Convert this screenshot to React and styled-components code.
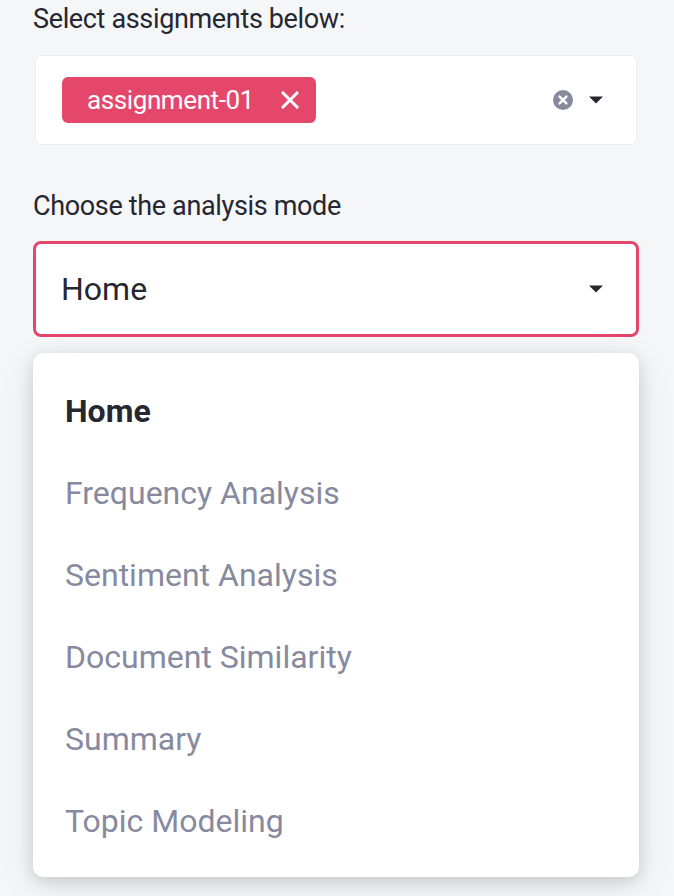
import React from "react";
import styled, { createGlobalStyle } from "styled-components";

const Global = createGlobalStyle`
  html, body { margin: 0; padding: 0; background: #f5f6f8; }
  body { font-family: Roboto, "Noto Sans", "Liberation Sans", sans-serif; color: #262730; }
  * { box-sizing: border-box; }
`;

const Page = styled.div`
  width: 674px;
  height: 896px;
  overflow: hidden;
  padding: 1px 35px 0 33px;
  display: flex;
  flex-direction: column;
`;

const Label = styled.div`
  font-size: 27px;
  line-height: 36px;
  height: 36px;
  color: #262730;
  letter-spacing: -0.35px;
  margin-top: ${(p) => p.$top || 0}px;
`;

const MultiBox = styled.div`
  margin-top: 18px;
  margin-left: 2px;
  margin-right: 2px;
  height: 90px;
  background: #fff;
  border: 1px solid #eceef2;
  border-radius: 6px;
  display: flex;
  align-items: center;
  padding: 0 32px 0 26px;
`;

const Tag = styled.div`
  height: 46px;
  width: 254px;
  background: #e4476a;
  border-radius: 6px;
  color: #fff;
  font-size: 26px;
  letter-spacing: -0.4px;
  display: flex;
  align-items: center;
  justify-content: space-between;
  padding: 0 17px 0 25px;
`;

const Spacer = styled.div`
  flex: 1;
`;

const IconRow = styled.div`
  display: flex;
  align-items: center;
  gap: 14px;
`;

const Select = styled.div`
  margin-top: 17px;
  height: 96px;
  background: #fff;
  border: 3px solid #e4476a;
  border-radius: 8px;
  display: flex;
  align-items: center;
  padding: 0 32px 0 25px;
  font-size: 32px;
  color: #262730;
`;

const Menu = styled.div`
  margin-top: 16px;
  background: #fff;
  border-radius: 10px;
  box-shadow: 0 4px 16px rgba(0, 0, 0, 0.14), 0 10px 40px rgba(0, 0, 0, 0.08);
  padding: 17px 0 15px 32px;
  display: flex;
  flex-direction: column;
`;

const Item = styled.div`
  height: 82px;
  line-height: 82px;
  font-size: 32px;
  font-weight: ${(p) => (p.$active ? 700 : 400)};
  color: ${(p) => (p.$active ? "#262730" : "#878a9e")};
  white-space: nowrap;
`;

const Caret = () => (
  <svg width="16" height="10" viewBox="0 0 16 10">
    <path d="M1 1.5 L15 1.5 L8 8.5 Z" fill="#262730" />
  </svg>
);

const ClearIcon = () => (
  <svg width="22" height="22" viewBox="0 0 22 22">
    <circle cx="11" cy="11" r="10" fill="#878a9e" />
    <path d="M7.6 7.6 L14.4 14.4 M14.4 7.6 L7.6 14.4" stroke="#fff" strokeWidth="2.4" strokeLinecap="round" />
  </svg>
);

const TagClose = () => (
  <svg width="18" height="18" viewBox="0 0 18 18">
    <path d="M2 2 L16 16 M16 2 L2 16" stroke="#fff" strokeWidth="3" strokeLinecap="square" />
  </svg>
);

const options = [
  "Home",
  "Frequency Analysis",
  "Sentiment Analysis",
  "Document Similarity",
  "Summary",
  "Topic Modeling",
];

export default function App() {
  return (
    <>
      <Global />
      <Page>
        <Label>Select assignments below:</Label>
        <MultiBox>
          <Tag>
            <span>assignment-01</span>
            <TagClose />
          </Tag>
          <Spacer />
          <IconRow>
            <ClearIcon />
            <Caret />
          </IconRow>
        </MultiBox>
        <Label $top={43}>Choose the analysis mode</Label>
        <Select>
          <span>Home</span>
          <Spacer />
          <Caret />
        </Select>
        <Menu>
          {options.map((o, i) => (
            <Item key={o} $active={i === 0}>
              {o}
            </Item>
          ))}
        </Menu>
      </Page>
    </>
  );
}
